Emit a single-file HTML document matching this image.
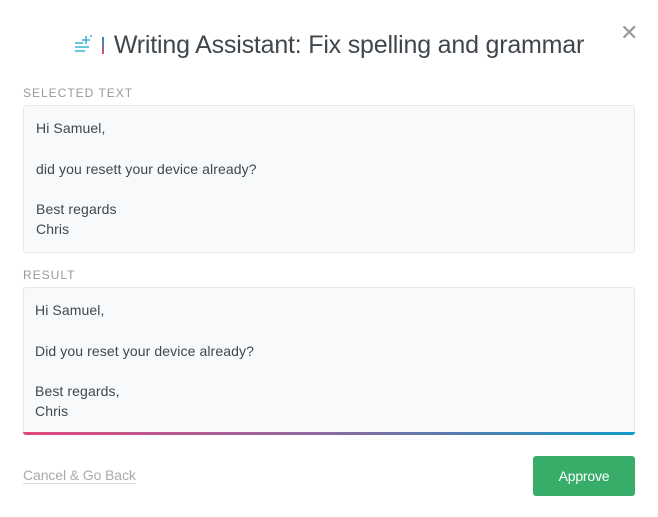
<!DOCTYPE html>
<html><head><style>
body{margin:0;width:658px;height:517px;background:#fff;font-family:"Liberation Sans",sans-serif;position:relative;overflow:hidden}
.title{position:absolute;left:0;right:0;top:31px;text-align:center;font-size:25px;color:#3f474d;letter-spacing:-0.2px;white-space:nowrap}
.close{position:absolute;left:620px;top:22px;font-size:22px;color:#999;line-height:1}
.label{position:absolute;left:23px;font-size:12px;letter-spacing:1px;color:#999}
.box{position:absolute;left:23px;width:612px;background:#f8f9fa;border:1px solid #e6e8ea;border-radius:3px;box-sizing:border-box;font-size:14px;color:#3f474d;line-height:20.3px;padding:12px 12px;letter-spacing:0.1px}
.grad{position:absolute;left:23px;top:432px;width:612px;height:3px;background:linear-gradient(90deg,#e2487f,#8a6a9f,#119ac8);border-radius:0 0 3px 3px}
.cancel{position:absolute;left:23px;top:467px;font-size:14px;color:#aaa;border-bottom:1px solid #ddd;letter-spacing:-0.1px}
.btn{position:absolute;left:533px;top:456px;width:102px;height:40px;background:#38ad69;border-radius:3px;color:#fff;font-size:14px;text-align:center;line-height:40px;letter-spacing:-0.2px}
</style></head><body>
<div class="title"><svg width="20" height="20" viewBox="0 0 20 20" style="vertical-align:-1px;margin-right:8px"><g stroke="#45b6d6" stroke-width="1.6"><line x1="1" y1="9" x2="9" y2="9"/><line x1="1" y1="13" x2="15" y2="13"/><line x1="1" y1="17" x2="11" y2="17"/><line x1="12" y1="2" x2="12" y2="10"/><line x1="8" y1="6" x2="16" y2="6"/><line x1="17" y1="1" x2="17" y2="3"/></g></svg><span style="display:inline-block;width:2px;height:17px;background:linear-gradient(#119ac8,#e2487f);margin-right:10px;vertical-align:-1px"></span>Writing Assistant: Fix spelling and grammar</div>
<div class="close">✕</div>
<div class="label" style="top:86px">SELECTED TEXT</div>
<div class="box" style="top:105px;height:148px">Hi Samuel,<br><br>did you resett your device already?<br><br>Best regards<br>Chris</div>
<div class="label" style="top:268px">RESULT</div>
<div class="box" style="top:287px;height:148px;padding-left:11px">Hi Samuel,<br><br>Did you reset your device already?<br><br>Best regards,<br>Chris</div>
<div class="grad"></div>
<div class="cancel">Cancel &amp; Go Back</div>
<div class="btn">Approve</div>
</body></html>
